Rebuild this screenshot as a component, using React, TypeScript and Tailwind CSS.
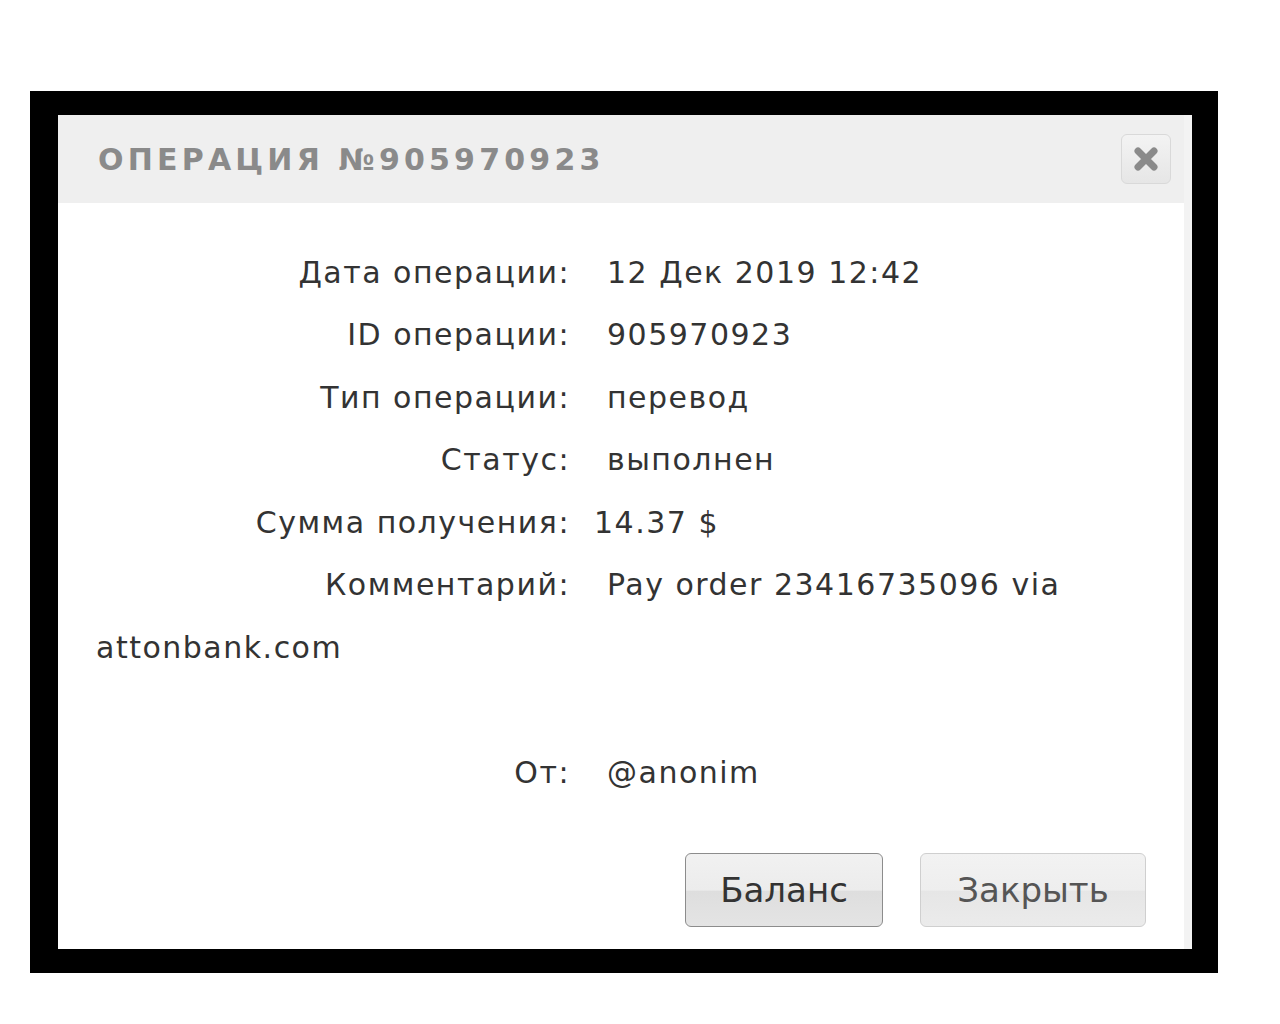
const ROWS: [string, string][] = [
  ["Дата операции:", "12 Дек 2019 12:42"],
  ["ID операции:", "905970923"],
  ["Тип операции:", "перевод"],
  ["Статус:", "выполнен"],
];

function Row({ label, children }: { label: string; children: React.ReactNode }) {
  return (
    <div className="flex h-[62.5px] items-center">
      <span className="w-[474px] shrink-0 text-right">{label}</span>
      <span className="ml-[37px]">{children}</span>
    </div>
  );
}

function CloseIcon() {
  return (
    <svg width="26" height="26" viewBox="0 0 26 26">
      <path d="M5 5 L21 21 M21 5 L5 21" stroke="#8a8a8a" strokeWidth="7" strokeLinecap="round" />
    </svg>
  );
}

export default function App() {
  return (
    <div className="min-h-screen bg-white pt-[91px] pl-[30px]">
      <div className="w-[1188px] bg-black pt-[24px] pr-[26px] pb-[24px] pl-[28px]">
        <div className="flex h-[834px] w-[1134px] flex-col border-r-8 border-[#f3f3f3] bg-white">
          {/* header */}
          <div className="flex h-[88px] shrink-0 items-center justify-between bg-[#efefef] pr-[13px] pl-[40px]">
            <h1 className="font-['DejaVu_Sans',sans-serif] text-[30px] font-bold tracking-[4.2px] text-[#8a8a8a]">
              ОПЕРАЦИЯ №905970923
            </h1>
            <button className="flex size-[50px] items-center justify-center rounded-md border border-[#d9d9d9] bg-gradient-to-b from-[#f3f3f3] to-[#e6e6e6]">
              <CloseIcon />
            </button>
          </div>

          {/* body */}
          <div className="flex grow flex-col px-[38px] pt-[38px] font-['DejaVu_Sans',sans-serif] text-[30px] tracking-[1.5px] text-[#333]">
            {ROWS.map(([l, v]) => (
              <Row key={l} label={l}>
                {v}
              </Row>
            ))}
            <Row label="Сумма получения:">
              <span className="-ml-[13px]">14.37 $</span>
            </Row>
            <Row label="Комментарий:">Pay order 23416735096 via</Row>
            <div className="flex h-[62.5px] items-center">attonbank.com</div>
            <div className="h-[62.5px]" />
            <Row label="От:">@anonim</Row>

            <div className="mt-auto flex justify-end gap-[37px] pb-[22px] font-['DejaVu_Sans',sans-serif] text-[34px] tracking-normal">
              <button className="h-[74px] w-[198px] rounded-md border border-[#8c8c8c] bg-[linear-gradient(#f1f1f1_0%,#ececec_50%,#dedede_52%,#e4e4e4_100%)] text-[#333]">
                Баланс
              </button>
              <button className="h-[74px] w-[226px] rounded-md border border-[#cfcfcf] bg-[linear-gradient(#f2f2f2_0%,#eeeeee_50%,#e6e6e6_52%,#ebebeb_100%)] text-[#555]">
                Закрыть
              </button>
            </div>
          </div>
        </div>
      </div>
    </div>
  );
}
